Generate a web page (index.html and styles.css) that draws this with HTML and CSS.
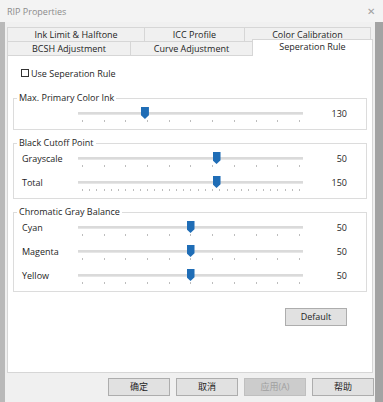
FILE: index.html
```html
<!DOCTYPE html>
<html lang="en">
  <head>
    <meta charset="UTF-8" />
    <title>RIP Properties</title>
    <link rel="stylesheet" href="styles.css">
  </head>
  <body>
    <div class="window">
      <div class="titlebar">
        <span class="title">RIP Properties</span>
        <span class="close">✕</span>
      </div>

      <div class="frame">
        <div class="tab-row back">
          <div class="tab">Ink Limit &amp; Halftone</div>
          <div class="tab">ICC Profile</div>
          <div class="tab">Color Calibration</div>
        </div>
        <div class="tab-row front">
          <div class="tab">BCSH Adjustment</div>
          <div class="tab">Curve Adjustment</div>
          <div class="tab active">Seperation Rule</div>
        </div>

        <div class="panel">
          <label class="check">
            <span class="box"></span>
            <span>Use Seperation Rule</span>
          </label>

          <fieldset class="group first">
            <legend>Max. Primary Color Ink</legend>
            <div class="row">
              <span class="label"></span>
              <div class="slider">
                <div class="track"></div>
                <div class="thumb" style="--pos: 29"></div>
                <div class="ticks"></div>
              </div>
              <span class="value">130</span>
            </div>
          </fieldset>

          <fieldset class="group">
            <legend>Black Cutoff Point</legend>
            <div class="row">
              <span class="label">Grayscale</span>
              <div class="slider">
                <div class="track"></div>
                <div class="thumb" style="--pos: 62"></div>
                <div class="ticks"></div>
              </div>
              <span class="value">50</span>
            </div>
            <div class="row">
              <span class="label">Total</span>
              <div class="slider">
                <div class="track"></div>
                <div class="thumb" style="--pos: 62"></div>
                <div class="ticks dense"></div>
              </div>
              <span class="value">150</span>
            </div>
          </fieldset>

          <fieldset class="group">
            <legend>Chromatic Gray Balance</legend>
            <div class="row">
              <span class="label">Cyan</span>
              <div class="slider">
                <div class="track"></div>
                <div class="thumb" style="--pos: 50"></div>
                <div class="ticks"></div>
              </div>
              <span class="value">50</span>
            </div>
            <div class="row">
              <span class="label">Magenta</span>
              <div class="slider">
                <div class="track"></div>
                <div class="thumb" style="--pos: 50"></div>
                <div class="ticks"></div>
              </div>
              <span class="value">50</span>
            </div>
            <div class="row">
              <span class="label">Yellow</span>
              <div class="slider">
                <div class="track"></div>
                <div class="thumb" style="--pos: 50"></div>
                <div class="ticks"></div>
              </div>
              <span class="value">50</span>
            </div>
          </fieldset>

          <div class="panel-actions">
            <button class="btn">Default</button>
          </div>
        </div>

        <div class="buttons">
          <button class="btn">确定</button>
          <button class="btn">取消</button>
          <button class="btn" disabled>应用(A)</button>
          <button class="btn">帮助</button>
        </div>
      </div>
    </div>
  </body>
</html>
```

FILE: styles.css
```css
* {
  box-sizing: border-box;
}

body {
  margin: 0;
  background-color: #f0f0f0;
  font-family: "Open Sans", "Noto Sans CJK SC", sans-serif;
  font-size: 9px;
  color: #1e1e1e;
}

.window {
  width: 383px;
  height: 402px;
  display: flex;
  flex-direction: column;
}

.titlebar {
  height: 22px;
  display: flex;
  align-items: center;
  justify-content: space-between;
  padding: 0 8px 0 7px;
  background-color: #f3f3f3;
  color: #8c8c8c;
}

.close {
  font-size: 10px;
  color: #a0a0a0;
}

.frame {
  flex: 1;
  display: flex;
  flex-direction: column;
  border-left: 5px solid #b9b9b9;
  border-right: 8px solid #a3a3a3;
  padding: 5px 2px 0;
}

/* tabs */
.tab-row {
  display: grid;
  height: 14px;
}

.tab-row.back {
  grid-template-columns: 138px 100px 126px;
}

.tab-row.front {
  grid-template-columns: 124px 122px 120px;
}

.tab {
  border: 1px solid #d6d6d6;
  border-bottom: none;
  margin-left: -1px;
  text-align: center;
  line-height: 13px;
  white-space: nowrap;
  background-color: #f0f0f0;
}

.tab:first-child {
  margin-left: 0;
}

.tab.active {
  position: relative;
  z-index: 1;
  height: 17px;
  margin-top: -2px;
  line-height: 14px;
  background-color: #fff;
}

/* page */
.panel {
  height: 318px;
  background-color: #fff;
  border: 1px solid #d6d6d6;
  padding: 11px 5px 0;
  display: flex;
  flex-direction: column;
}

.check {
  display: flex;
  align-items: center;
  gap: 2px;
  height: 12px;
  margin-left: 8px;
}

.box {
  width: 8px;
  height: 8px;
  border: 1px solid #333;
  background-color: #fff;
}

.group {
  margin: 7px 0 0;
  padding: 0 19px 1px 3px;
  border: 1px solid #dcdcdc;
  min-width: 0;
}

.group.first {
  margin-top: 13px;
}

.group legend {
  padding: 0 2px;
  line-height: 12px;
}

.row {
  display: grid;
  grid-template-columns: 56px 225px 1fr;
  height: 24px;
  padding-left: 5px;
}

.label,
.value {
  line-height: 19px;
}

.value {
  text-align: right;
}

.slider {
  position: relative;
  padding-top: 8px;
}

.track {
  height: 3px;
  background-color: #dadada;
  border-bottom: 1px solid #e6e6e6;
}

.thumb {
  position: absolute;
  top: 3px;
  left: calc(4px + var(--pos) * 217px / 100);
  width: 8px;
  height: 12px;
  margin-left: -4px;
  background-color: #1f6db6;
  clip-path: polygon(0 0, 100% 0, 100% 68%, 50% 100%, 0 68%);
}

.ticks {
  height: 2px;
  margin: 5px 3px 0 4px;
  background: repeating-linear-gradient(
    to right,
    #bdbdbd 0 1px,
    transparent 1px 21.7px
  );
}

.ticks.dense {
  background: repeating-linear-gradient(
    to right,
    #bdbdbd 0 1px,
    transparent 1px 7.233px
  );
}

.panel-actions {
  display: flex;
  justify-content: flex-end;
  margin-top: 16px;
  padding-right: 20px;
}

/* buttons */
.btn {
  width: 62px;
  height: 18px;
  padding: 0;
  border: 1px solid #adadad;
  background-color: #e1e1e1;
  color: #1e1e1e;
  font-family: "Open Sans", "Noto Sans CJK SC", sans-serif;
  font-size: 9px;
  line-height: 16px;
}

.btn:disabled {
  background-color: #cccccc;
  border-color: #bfbfbf;
  color: #a0a0a0;
}

.buttons {
  display: flex;
  justify-content: flex-end;
  gap: 6px;
  padding-top: 5px;
  margin-right: -1px;
}
```
